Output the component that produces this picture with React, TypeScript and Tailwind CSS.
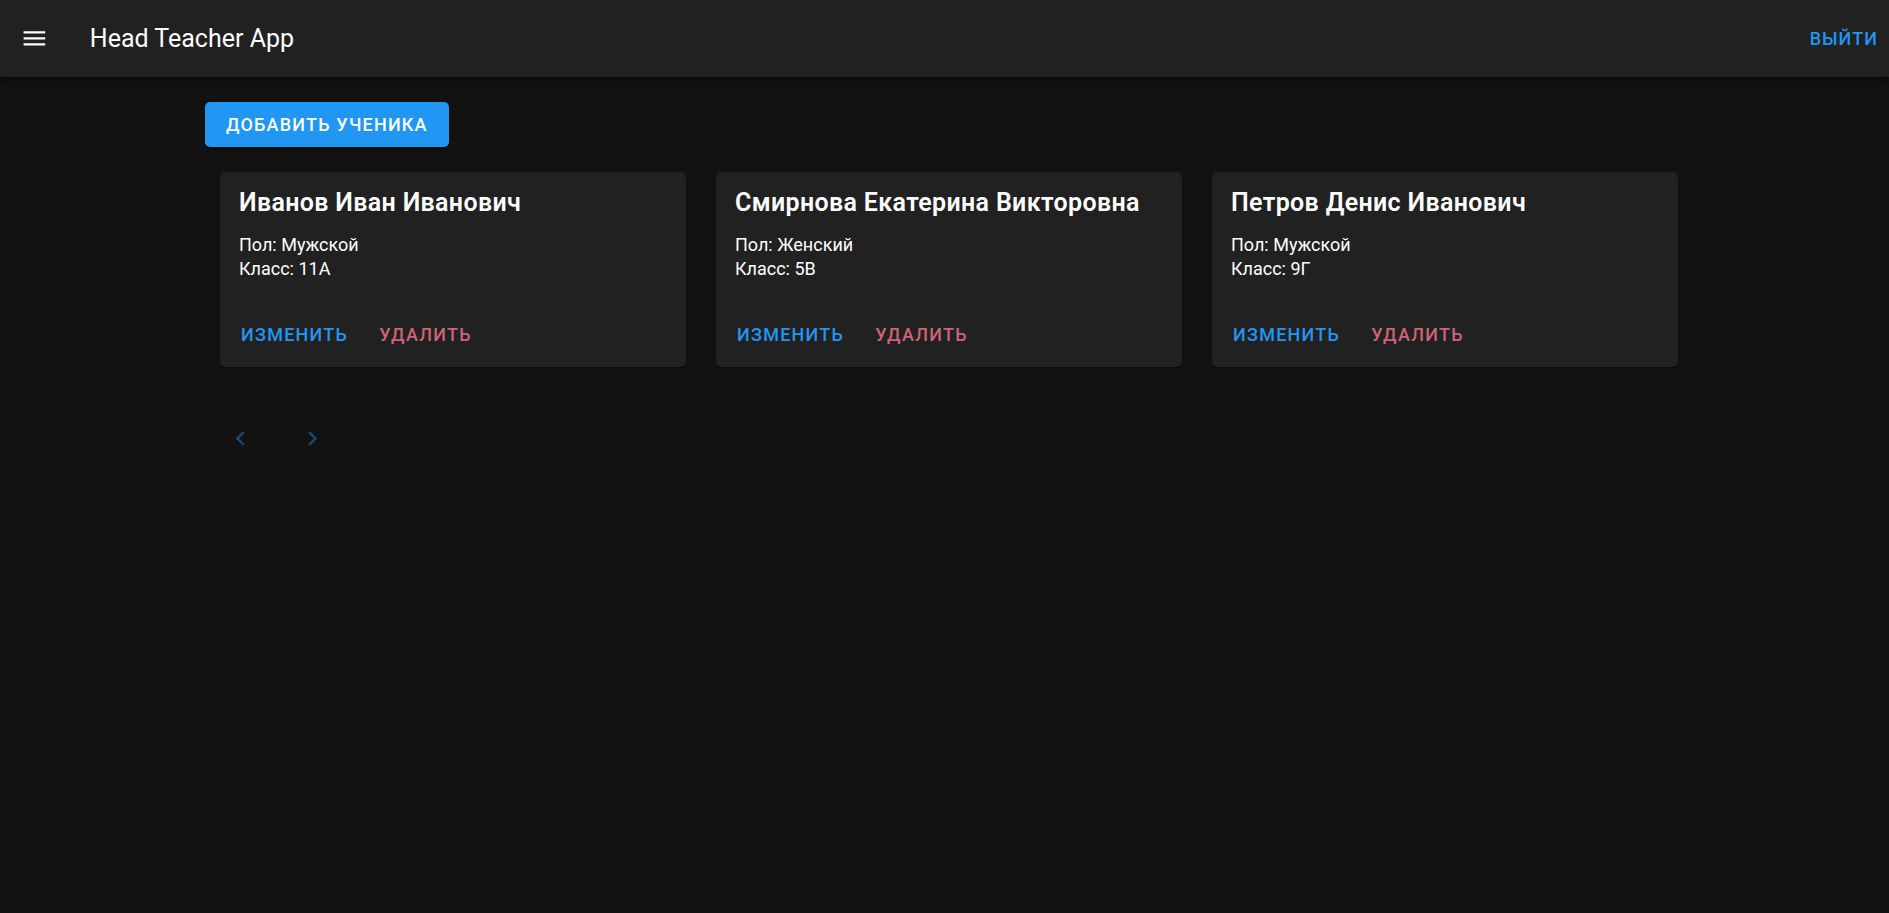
import React from "react";

interface Student {
  id: number;
  name: string;
  gender: string;
  grade: string;
}

const students: Student[] = [
  { id: 1, name: "Иванов Иван Иванович", gender: "Мужской", grade: "11А" },
  { id: 2, name: "Смирнова Екатерина Викторовна", gender: "Женский", grade: "5В" },
  { id: 3, name: "Петров Денис Иванович", gender: "Мужской", grade: "9Г" },
];

function MenuIcon() {
  return (
    <svg viewBox="0 0 24 24" className="w-[28.8px] h-[28.8px]" fill="currentColor">
      <path d="M3 18h18v-2H3zm0-5h18v-2H3zm0-7v2h18V6z" />
    </svg>
  );
}

function StudentCard({ student }: { student: Student }) {
  return (
    <div className="w-[466px] h-[195px] bg-[#212121] rounded-[5px] shadow-[0_2px_1px_-1px_rgba(0,0,0,0.2),0_1px_1px_0_rgba(0,0,0,0.14),0_1px_3px_0_rgba(0,0,0,0.12)] flex flex-col">
      <div className="px-[19px] pt-[16px]">
        <h2 className="text-[25px] leading-[30px] font-semibold tracking-[0.35px] text-white">{student.name}</h2>
        <div className="mt-[15px] text-[18px] leading-[24px] text-white">
          <p>Пол: {student.gender}</p>
          <p>Класс: {student.grade}</p>
        </div>
      </div>
      <div className="flex items-center gap-[9px] px-[10px] mt-[32px]">
        <button className="px-[11px] h-[44px] text-[18px] font-medium uppercase tracking-[1.25px] text-[#2196f3] rounded">
          Изменить
        </button>
        <button className="px-[11px] h-[44px] text-[18px] font-medium uppercase tracking-[1.25px] text-[#ce6379] rounded">
          Удалить
        </button>
      </div>
    </div>
  );
}

export default function App() {
  return (
    <div className="min-h-screen bg-[#121212] text-white" style={{ fontFamily: "Roboto, 'Noto Sans', sans-serif" }}>
      {/* App bar */}
      <header className="h-[77px] bg-[#212121] flex items-center pl-[20px] pr-[11px] shadow-[0_2px_4px_-1px_rgba(0,0,0,0.2),0_4px_5px_0_rgba(0,0,0,0.14),0_1px_10px_0_rgba(0,0,0,0.12)]">
        <button className="text-white flex items-center">
          <MenuIcon />
        </button>
        <h1 className="ml-[41px] text-[25px] leading-[32px] font-normal text-white">Head Teacher App</h1>
        <div className="flex-1" />
        <button className="text-[18px] font-medium uppercase tracking-[1px] text-[#2196f3]">Выйти</button>
      </header>

      <main className="pl-[205px] pt-[25px]">
        <button className="h-[44.5px] px-[21px] bg-[#2196f3] rounded-[5px] text-white text-[18px] font-medium uppercase tracking-[1.2px] shadow-[0_3px_1px_-2px_rgba(0,0,0,0.2),0_2px_2px_0_rgba(0,0,0,0.14),0_1px_5px_0_rgba(0,0,0,0.12)]">
          Добавить ученика
        </button>

        <div className="flex gap-[30px] ml-[15px] mt-[25px]">
          {students.map((s) => (
            <StudentCard key={s.id} student={s} />
          ))}
        </div>

        <div className="flex items-center gap-[43px] ml-[21px] mt-[57px] text-[#1b4a70]">
          <svg viewBox="0 0 24 24" className="w-[28.8px] h-[28.8px]" fill="currentColor">
            <path d="M15.41 7.41 14 6l-6 6 6 6 1.41-1.41L10.83 12z" />
          </svg>
          <svg viewBox="0 0 24 24" className="w-[28.8px] h-[28.8px]" fill="currentColor">
            <path d="M10 6 8.59 7.41 13.17 12l-4.58 4.59L10 18l6-6z" />
          </svg>
        </div>
      </main>
    </div>
  );
}
